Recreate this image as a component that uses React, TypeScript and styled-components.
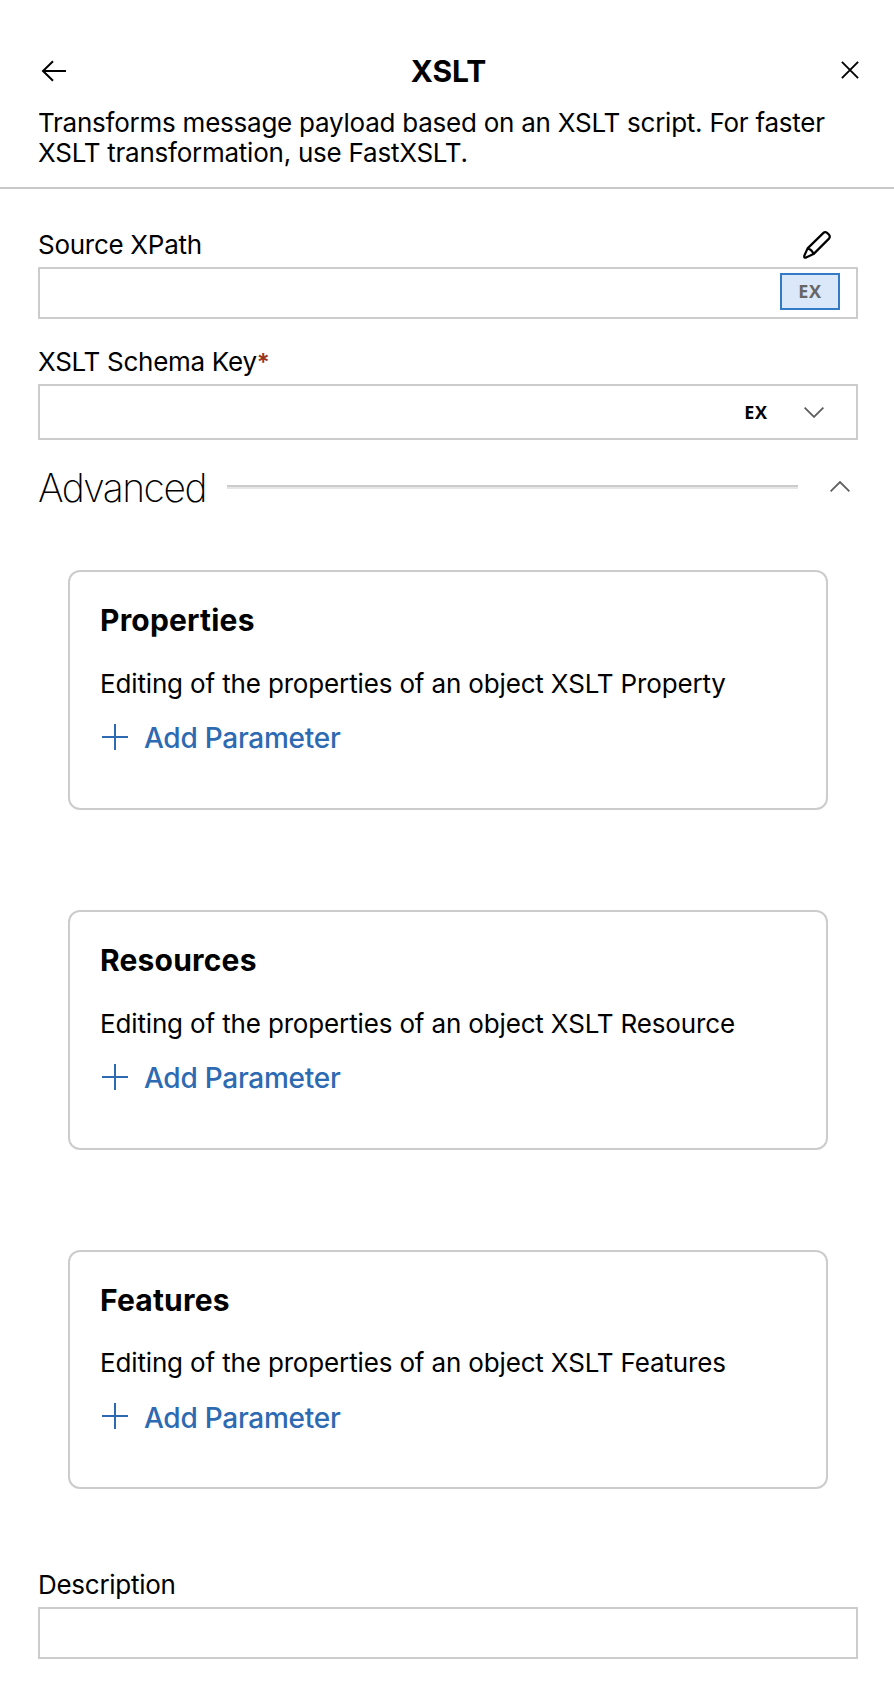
import React from "react";
import styled, { createGlobalStyle } from "styled-components";

const GlobalStyle = createGlobalStyle`
  *, *::before, *::after { box-sizing: border-box; }
  body { margin: 0; background: #fff; color: #000; }
  button { font: inherit; color: inherit; background: none; border: 0; padding: 0; }
  h1, h2, h3, p { margin: 0; }
  svg { display: block; }
`;

const Panel = styled.div`
  width: 894px;
  height: 1700px;
  background: #fff;
  font-family: Inter, "Liberation Sans", sans-serif;
  font-size: 26px;
  line-height: 30px;
  overflow: hidden;
`;

const Header = styled.header`
  padding: 53px 34px 19px 38px;
  border-bottom: 2px solid #c8c8c8;
`;

const TitleBar = styled.div`
  display: grid;
  grid-template-columns: 32px 1fr 28px;
  height: 36px;
  margin-bottom: 19px;
`;

const Title = styled.h1`
  padding-right: 5px;
  font-size: 30px;
  line-height: 36px;
  font-weight: 700;
  text-align: center;
  letter-spacing: -0.1px;
`;

const IconButton = styled.button<{ $top?: number; $left?: number }>`
  display: block;
  justify-self: start;
  align-self: start;
  margin: ${(p) => p.$top ?? 0}px 0 0 ${(p) => p.$left ?? 0}px;
`;

const Summary = styled.p`
  letter-spacing: -0.24px;
  white-space: nowrap;
`;

const Form = styled.form`
  padding: 41px 36px 0 38px;
`;

const Field = styled.div<{ $before?: number }>`
  margin-top: ${(p) => p.$before ?? 0}px;
`;

const LabelRow = styled.div`
  display: flex;
  justify-content: space-between;
  height: 30px;
  margin-bottom: 7px;
  padding-right: 27px;
`;

const Label = styled.label`
  letter-spacing: -0.28px;
  white-space: nowrap;
`;

const Required = styled.span`
  color: #983522;
  font-size: 24px;
  font-weight: 600;
  line-height: 1;
`;

const InputBox = styled.div<{ $height?: number; $inset?: number }>`
  display: flex;
  justify-content: flex-end;
  height: ${(p) => p.$height ?? 52}px;
  padding-right: ${(p) => p.$inset ?? 16}px;
  border: 2px solid #ccc;
`;

const ExpressionButton = styled.button<{ $active?: boolean }>`
  width: 60px;
  height: 37px;
  margin: ${(p) => (p.$active ? "4px 0 0" : "8px 18px 0 0")};
  border: 2px solid ${(p) => (p.$active ? "#337ac7" : "transparent")};
  background: ${(p) => (p.$active ? "#dae8f9" : "transparent")};
  color: ${(p) => (p.$active ? "#666" : "#000")};
  font: 700 18px/33px "Open Sans", sans-serif;
  letter-spacing: 0.6px;
  text-align: center;
`;

const SectionHeader = styled.div`
  display: flex;
  height: 48px;
  margin-top: 24px;
`;

const SectionTitle = styled.h2`
  width: 189px;
  flex: none;
  font-size: 39px;
  line-height: 48px;
  font-weight: 200;
  letter-spacing: -1.5px;
`;

const Rule = styled.div`
  width: 571px;
  height: 4px;
  margin-top: 21px;
  border-top: 2px solid #ccc;
  background: #e6e6e6;
`;

const Cards = styled.div`
  display: flex;
  flex-direction: column;
  gap: 100px;
  margin: 58px 30px 0;
`;

const Card = styled.section<{ $height: number }>`
  height: ${(p) => p.$height}px;
  padding: 30px 30px 0;
  border: 2px solid #ccc;
  border-radius: 12px;
`;

const CardTitle = styled.h3`
  font-size: 30px;
  line-height: 36px;
  font-weight: 700;
  letter-spacing: 0.2px;
`;

const CardText = styled.p<{ $before: number }>`
  margin-top: ${(p) => p.$before}px;
  letter-spacing: -0.15px;
  white-space: nowrap;
`;

const AddButton = styled.button<{ $before: number; $iconTop: number }>`
  display: flex;
  gap: 16px;
  margin-top: ${(p) => p.$before}px;
  padding-left: 2px;
  color: #2d6ab1;
  font-size: 28px;
  line-height: 34px;
  font-weight: 500;
  letter-spacing: -0.26px;
  svg { margin-top: ${(p) => p.$iconTop}px; }
`;

const BackIcon = () => (
  <svg width="26" height="22" viewBox="0 0 26 22" fill="none" stroke="#000" strokeWidth="2">
    <path d="M25 11H1.6M12 1.2L2 11L12 20.8" />
  </svg>
);

const CloseIcon = () => (
  <svg width="18" height="18" viewBox="0 0 18 18" fill="none" stroke="#000" strokeWidth="1.9">
    <path d="M.9.9L17.1 17.1M17.1.9L.9 17.1" />
  </svg>
);

const PencilIcon = () => (
  <svg width="28" height="28" viewBox="0 0 28 28" fill="none" stroke="#000" strokeWidth="2.2" strokeLinejoin="round">
    <path d="M4.6 17.4L20.2 2.1Q21.9.5 23.8 1.6L26.1 3.8Q27.5 5.8 26 7.6L10.5 23.1L3 26.6Q.8 27.1 1.3 24.8ZM4.6 17.4Q9 18.7 10.5 23.1" />
  </svg>
);

const Chevron = ({ up = false }: { up?: boolean }) => (
  <svg width="20" height="11" viewBox="0 0 20 11" fill="none" stroke="#5e5e5e" strokeWidth="1.8">
    <path d={up ? "M.6 10.3L10 1L19.4 10.3" : "M.6.6L10 9.9L19.4.6"} />
  </svg>
);

const PlusIcon = () => (
  <svg width="26" height="26" viewBox="0 0 26 26" fill="none" stroke="currentColor" strokeWidth="2">
    <path d="M13 0V26M0 13H26" />
  </svg>
);

const sections = [
  { title: "Properties", object: "Property", height: 240, textGap: 31, addGap: 22, iconTop: 3 },
  { title: "Resources", object: "Resource", height: 240, textGap: 31, addGap: 22, iconTop: 3 },
  { title: "Features", object: "Features", height: 239, textGap: 30, addGap: 23, iconTop: 2 },
];

export default function App() {
  return (
    <Panel>
      <GlobalStyle />
      <Header>
        <TitleBar>
          <IconButton aria-label="Back" $top={7} $left={3}><BackIcon /></IconButton>
          <Title>XSLT</Title>
          <IconButton aria-label="Close" $top={8} $left={9}><CloseIcon /></IconButton>
        </TitleBar>
        <Summary>
          Transforms message payload based on an XSLT script. For faster
          <br />
          XSLT transformation, use FastXSLT.
        </Summary>
      </Header>
      <Form>
        <Field>
          <LabelRow>
            <Label>Source XPath</Label>
            <IconButton type="button" aria-label="Edit" $top={1}><PencilIcon /></IconButton>
          </LabelRow>
          <InputBox>
            <ExpressionButton type="button" $active>EX</ExpressionButton>
          </InputBox>
        </Field>
        <Field $before={28}>
          <LabelRow>
            <Label>XSLT Schema Key<Required>*</Required></Label>
          </LabelRow>
          <InputBox $height={56} $inset={32}>
            <ExpressionButton type="button">EX</ExpressionButton>
            <IconButton type="button" aria-label="Open list" $top={21}><Chevron /></IconButton>
          </InputBox>
        </Field>
        <SectionHeader>
          <SectionTitle>Advanced</SectionTitle>
          <Rule />
          <IconButton type="button" aria-label="Collapse" $top={17} $left={32}><Chevron up /></IconButton>
        </SectionHeader>
        <Cards>
          {sections.map((s) => (
            <Card key={s.title} $height={s.height}>
              <CardTitle>{s.title}</CardTitle>
              <CardText $before={s.textGap}>Editing of the properties of an object XSLT {s.object}</CardText>
              <AddButton type="button" $before={s.addGap} $iconTop={s.iconTop}>
                <PlusIcon />
                Add Parameter
              </AddButton>
            </Card>
          ))}
        </Cards>
        <Field $before={81}>
          <LabelRow>
            <Label>Description</Label>
          </LabelRow>
          <InputBox />
        </Field>
      </Form>
    </Panel>
  );
}
